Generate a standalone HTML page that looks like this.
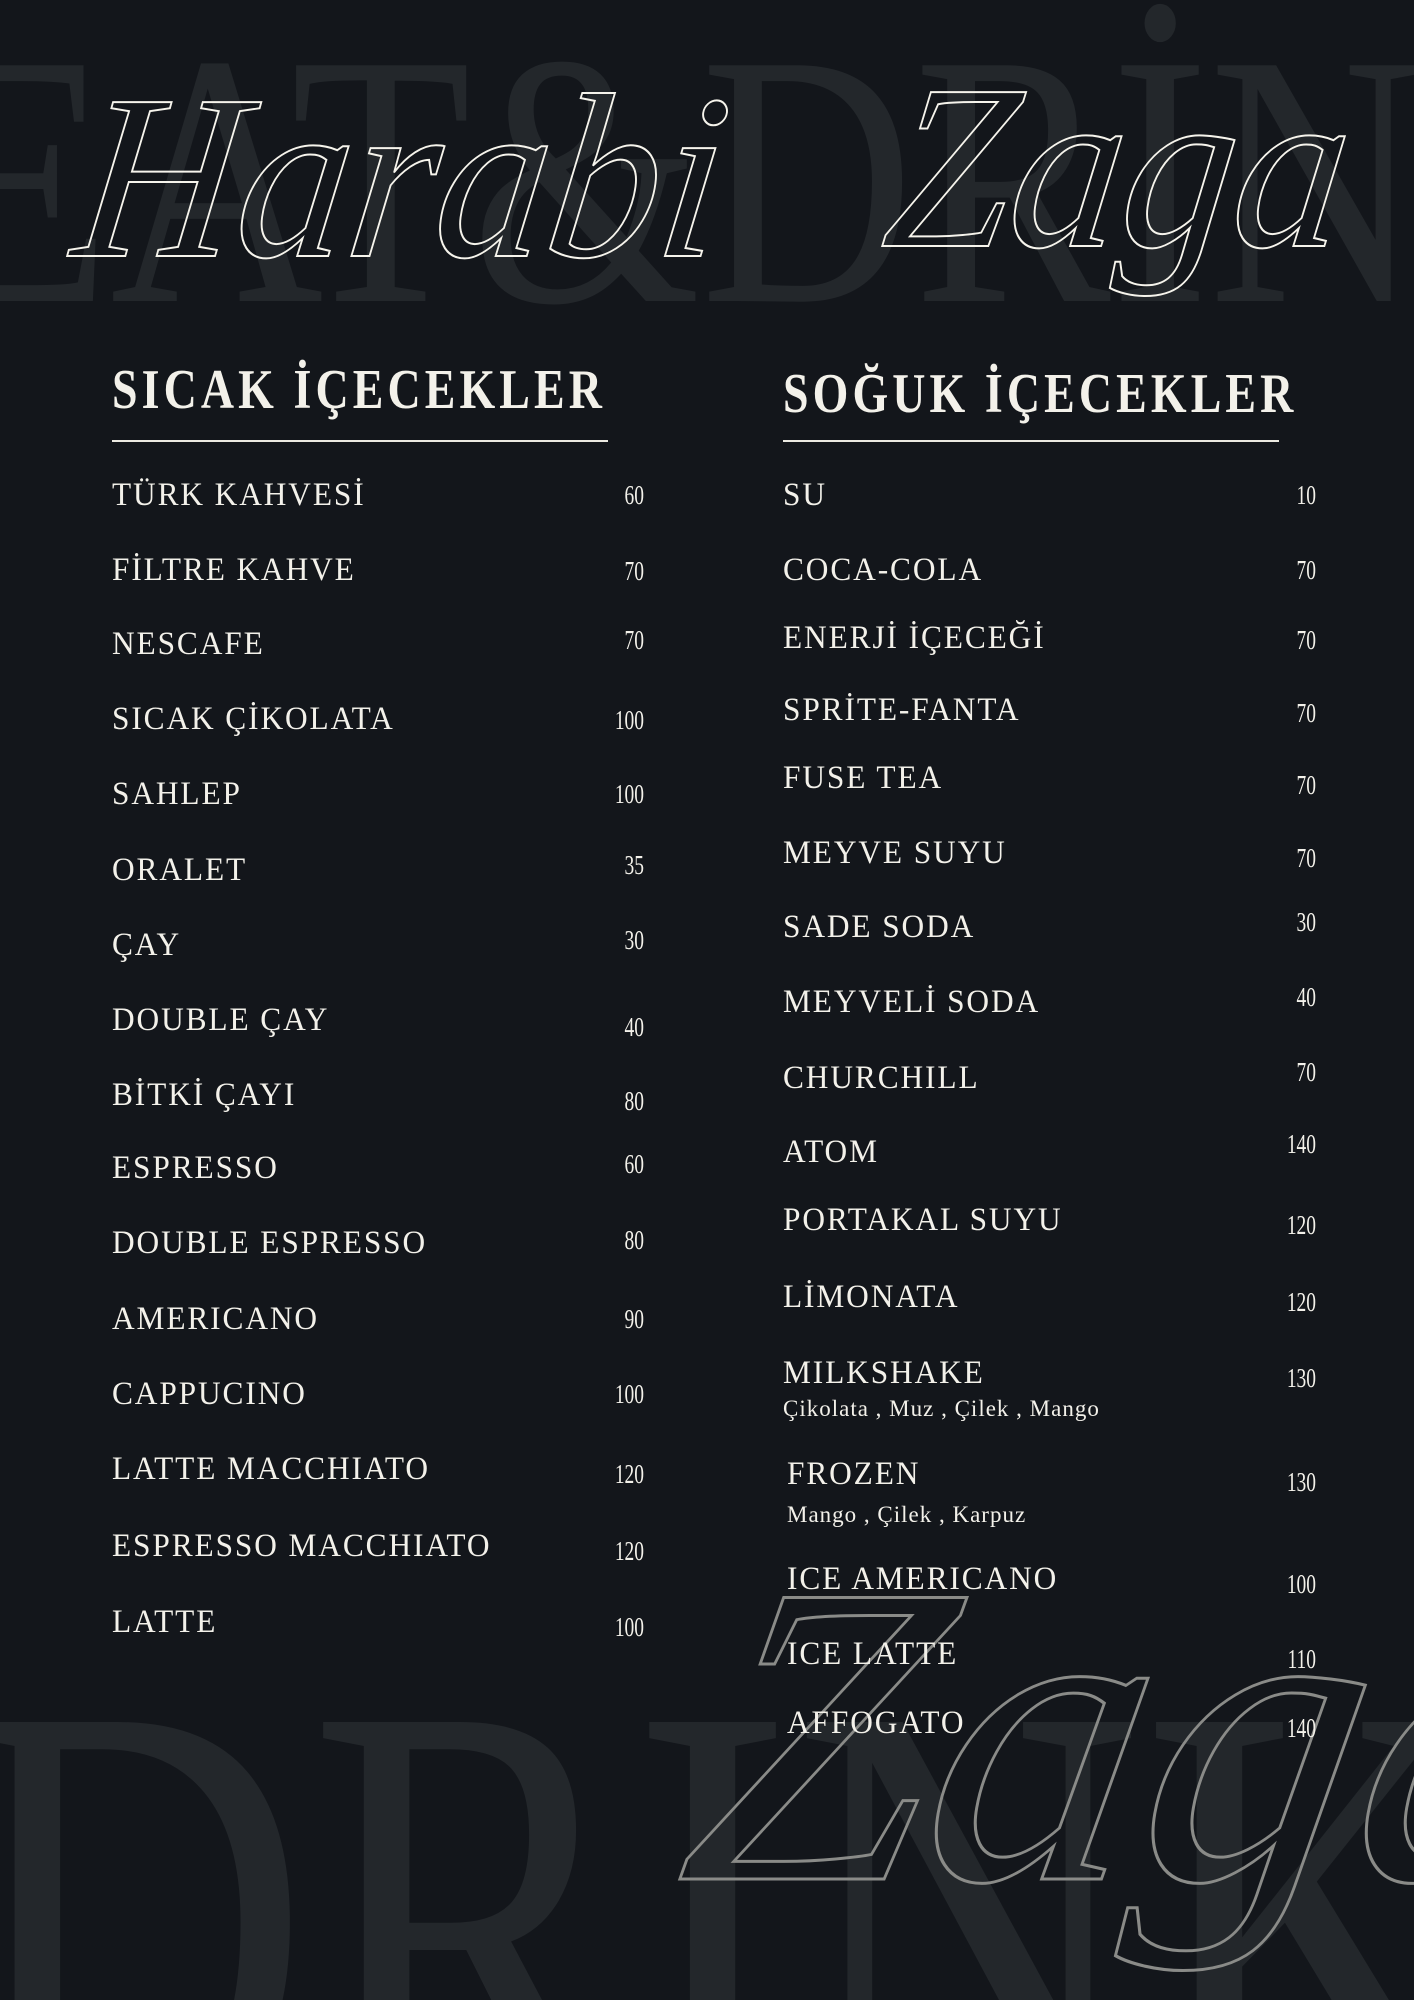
<!DOCTYPE html>
<html><head><meta charset="utf-8"><style>
html,body{margin:0;padding:0;width:1414px;height:2000px;overflow:hidden;background:#13161b}
#w{width:1414px;height:2000px;background:#13161b;position:relative;overflow:hidden;font-family:"Liberation Serif",serif;color:#f3f1ea}
.bg{position:absolute;color:#23272b;font-family:"Liberation Serif",serif;white-space:nowrap;line-height:1;transform-origin:left top}
.i{position:absolute;font-size:33px;line-height:32px;letter-spacing:2px;transform:scaleX(.95);transform-origin:left center;white-space:nowrap}
.p{position:absolute;font-size:27px;line-height:26px;transform:scaleX(.72);transform-origin:right center;text-align:right;white-space:nowrap;width:100px}
.l .p{right:770px}.r .p{right:98px}
.l .i{left:112px}.r .i{left:783px}
.s{position:absolute;font-size:23px;line-height:22px;left:783px;letter-spacing:1px;white-space:nowrap}
.h{position:absolute;font-size:56px;font-weight:bold;letter-spacing:5px;line-height:56px;transform:scaleX(.82);transform-origin:left center;white-space:nowrap}
.line{position:absolute;height:2px;background:#eceae2;top:440px}
.t{position:absolute;font-style:italic;font-family:"Liberation Serif",serif;color:transparent;-webkit-text-stroke:2px #f6f4ec;white-space:nowrap;line-height:1}
</style></head><body><div id="w">
<div class="bg" style="left:-70px;top:0px;font-size:360px;transform:scaleX(.82)">EAT&amp;DRİNK</div>
<div class="bg" style="left:-40px;top:1610px;font-size:620px;transform:scaleX(.78)">DRINK</div>
<div class="t" style="left:80px;top:60px;font-size:235px;transform:scaleX(.95) skewX(-8deg);transform-origin:left">Harabi</div>
<div class="t" style="left:890px;top:50px;font-size:235px;transform:scaleX(.95) skewX(-8deg);transform-origin:left">Zaga</div>
<div class="t" style="left:700px;top:1520px;font-size:430px;-webkit-text-stroke:3px #8a8b88;transform:skewX(-10deg)">Zaga</div>

<div class="h" style="left:112px;top:362px">SICAK İÇECEKLER</div>
<div class="line" style="left:112px;width:496px"></div>
<div class="h" style="left:783px;top:366px">SOĞUK İÇECEKLER</div>
<div class="line" style="left:783px;width:496px"></div>

<div class="l">
<div class="i" style="top:479px">TÜRK KAHVESİ</div><div class="p" style="top:482px">60</div>
<div class="i" style="top:554px">FİLTRE KAHVE</div><div class="p" style="top:558px">70</div>
<div class="i" style="top:628px">NESCAFE</div><div class="p" style="top:627px">70</div>
<div class="i" style="top:703px">SICAK ÇİKOLATA</div><div class="p" style="top:707px">100</div>
<div class="i" style="top:778px">SAHLEP</div><div class="p" style="top:781px">100</div>
<div class="i" style="top:854px">ORALET</div><div class="p" style="top:852px">35</div>
<div class="i" style="top:929px">ÇAY</div><div class="p" style="top:927px">30</div>
<div class="i" style="top:1004px">DOUBLE ÇAY</div><div class="p" style="top:1014px">40</div>
<div class="i" style="top:1079px">BİTKİ ÇAYI</div><div class="p" style="top:1088px">80</div>
<div class="i" style="top:1152px">ESPRESSO</div><div class="p" style="top:1151px">60</div>
<div class="i" style="top:1227px">DOUBLE ESPRESSO</div><div class="p" style="top:1227px">80</div>
<div class="i" style="top:1303px">AMERICANO</div><div class="p" style="top:1306px">90</div>
<div class="i" style="top:1378px">CAPPUCINO</div><div class="p" style="top:1381px">100</div>
<div class="i" style="top:1453px">LATTE MACCHIATO</div><div class="p" style="top:1461px">120</div>
<div class="i" style="top:1530px">ESPRESSO MACCHIATO</div><div class="p" style="top:1538px">120</div>
<div class="i" style="top:1606px">LATTE</div><div class="p" style="top:1614px">100</div>
</div>

<div class="r">
<div class="i" style="top:479px">SU</div><div class="p" style="top:482px">10</div>
<div class="i" style="top:554px">COCA-COLA</div><div class="p" style="top:557px">70</div>
<div class="i" style="top:622px">ENERJİ İÇECEĞİ</div><div class="p" style="top:627px">70</div>
<div class="i" style="top:694px">SPRİTE-FANTA</div><div class="p" style="top:700px">70</div>
<div class="i" style="top:762px">FUSE TEA</div><div class="p" style="top:772px">70</div>
<div class="i" style="top:837px">MEYVE SUYU</div><div class="p" style="top:845px">70</div>
<div class="i" style="top:911px">SADE SODA</div><div class="p" style="top:909px">30</div>
<div class="i" style="top:986px">MEYVELİ SODA</div><div class="p" style="top:984px">40</div>
<div class="i" style="top:1062px">CHURCHILL</div><div class="p" style="top:1059px">70</div>
<div class="i" style="top:1136px">ATOM</div><div class="p" style="top:1131px">140</div>
<div class="i" style="top:1204px">PORTAKAL SUYU</div><div class="p" style="top:1212px">120</div>
<div class="i" style="top:1281px">LİMONATA</div><div class="p" style="top:1289px">120</div>
<div class="i" style="top:1357px">MILKSHAKE</div><div class="p" style="top:1365px">130</div>
<div class="s" style="top:1398px">Çikolata , Muz , Çilek , Mango</div>
<div class="i" style="top:1458px;left:787px">FROZEN</div><div class="p" style="top:1469px">130</div>
<div class="s" style="top:1504px;left:787px">Mango , Çilek , Karpuz</div>
<div class="i" style="top:1563px;left:787px">ICE AMERICANO</div><div class="p" style="top:1571px">100</div>
<div class="i" style="top:1638px;left:787px">ICE LATTE</div><div class="p" style="top:1646px">110</div>
<div class="i" style="top:1707px;left:787px">AFFOGATO</div><div class="p" style="top:1715px">140</div>
</div>
</div></body></html>
